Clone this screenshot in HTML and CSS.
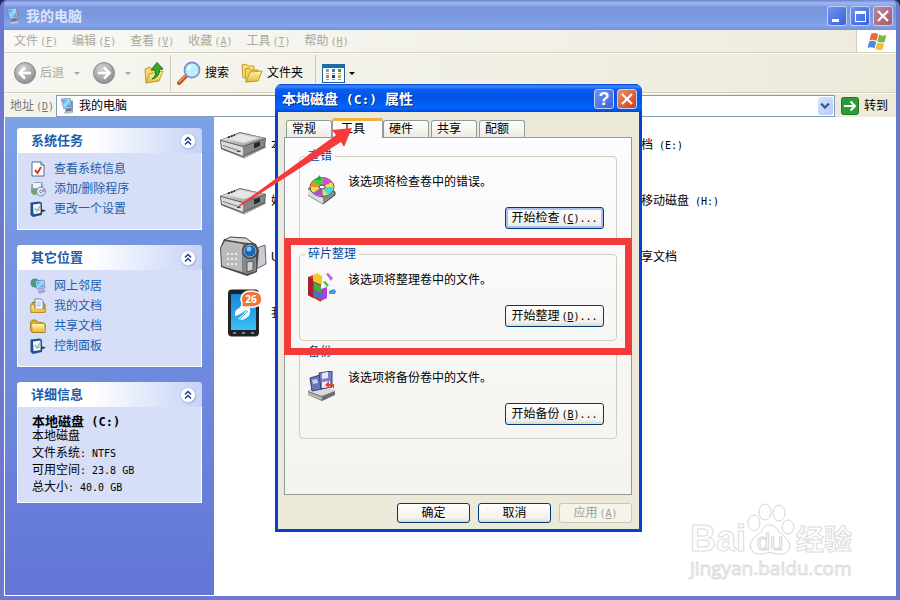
FILE: index.html
```html
<!DOCTYPE html>
<html lang="zh-CN">
<head>
    <meta charset="UTF-8">
    <meta name="viewport" content="width=device-width, initial-scale=1.0">
    <title>我的电脑</title>
    <link rel="stylesheet" href="styles.css">
</head>
<body>
    <!-- shared icons -->
    <svg class="defs" width="0" height="0">
        <defs>
            <linearGradient id="metal" x1="0" y1="0" x2="1" y2="1">
                <stop offset="0" stop-color="#f4f4f4"/>
                <stop offset="1" stop-color="#8c8c8c"/>
            </linearGradient>
            <linearGradient id="screen" x1="0" y1="0" x2="1" y2="1">
                <stop offset="0" stop-color="#2f7fd6"/>
                <stop offset="0.5" stop-color="#9be4fb"/>
                <stop offset="1" stop-color="#2a6fd0"/>
            </linearGradient>
            <linearGradient id="gold" x1="0" y1="0" x2="0" y2="1">
                <stop offset="0" stop-color="#fff6a8"/>
                <stop offset="1" stop-color="#e8b93c"/>
            </linearGradient>
            <linearGradient id="blueGlass" x1="0" y1="0" x2="0" y2="1">
                <stop offset="0" stop-color="#1587d6"/>
                <stop offset="1" stop-color="#3cc0f4"/>
            </linearGradient>
            <radialGradient id="grayBall" cx="0.4" cy="0.3" r="0.7">
                <stop offset="0" stop-color="#d6d6d6"/>
                <stop offset="1" stop-color="#8f8f8f"/>
            </radialGradient>
        </defs>
        <symbol id="pc" viewBox="0 0 16 16">
            <path d="M10 2 L13 3 L13 14 L9 15 Z" fill="#8d93ad"/>
            <path d="M1 1 L10 0 L12 10 L4 11 Z" fill="#c9d6ee" stroke="#5c74aa" stroke-width="0.6"/>
            <path d="M2 2 L9.4 1.2 L11 9 L4.6 9.8 Z" fill="url(#screen)"/>
            <path d="M6 11 L10 10.5 L11 13 L5 14 Z" fill="#6a7391"/>
            <path d="M4 14 L12 13 L13 15 L5 16 Z" fill="#b9bfd0"/>
        </symbol>
        <symbol id="chevrons" viewBox="0 0 18 18">
            <circle cx="9.5" cy="9.5" r="8" fill="#9aa8d4"/>
            <circle cx="9" cy="9" r="7.5" fill="#fff" stroke="#c3cdea"/>
            <path d="M6 8.5 L9 5.5 L12 8.5 M6 12.5 L9 9.5 L12 12.5" fill="none" stroke="#1d3f8a" stroke-width="1.5"/>
        </symbol>
        <symbol id="drive" viewBox="0 0 48 28">
            <path d="M3 18 L25 27 L47 16 L25 25 Z" fill="#bbb" stroke="#999"/>
            <path d="M1 9 L21 1 L47 7 L46 16 L24 26 L2 18 Z" fill="#5c5c5c"/>
            <path d="M2 9 L21 2 L46 7 L24 15 Z" fill="url(#metal)"/>
            <path d="M9 8 L21 3.5 L40 7 L25 12 Z" fill="#e6e6e6"/>
            <path d="M2 10 L24 16 L24 25 L3 17 Z" fill="#dcdcdc"/>
            <path d="M24 16 L46 8 L45 15 L24 25 Z" fill="#868686"/>
            <path d="M35 12.5 L41 10.5 L41 15 L35 17.5 Z" fill="#26282c"/>
            <path d="M4 14.5 L22 20.5" stroke="#777" stroke-width="1"/>
            <path d="M9 6.5 L16 4" stroke="#222" stroke-width="1.5" stroke-dasharray="2 1"/>
            <rect x="18" y="20" width="3" height="1" fill="#4a4a4a"/>
        </symbol>
        <symbol id="panelIcon" viewBox="0 0 16 16">
            <path d="M0.5 1.5 L10 0.5 L12 2 L12 14 L3 16 L0.5 14 Z" fill="#20518f"/>
            <path d="M3 3.5 L10.5 2.5 L10.5 12 L3.5 13.3 Z" fill="#eef6fb"/>
            <path d="M5 7 L7 10 L10 5" fill="none" stroke="#79a9c9" stroke-width="1.2"/>
            <path d="M7 9 L12 9.5" stroke="#e8b93c" stroke-width="1.6"/>
            <path d="M11 8 L16 9.5 L11 12 Z" fill="#24406e"/>
        </symbol>
        <symbol id="folder" viewBox="0 0 16 16">
            <path d="M0.5 4 L2.5 2 L6 2 L7.5 4 L14 5 L15.5 7 L15 14.5 L2 14.5 L0.5 12 Z" fill="#d9a92c" stroke="#94701b" stroke-width="0.8"/>
            <path d="M2 6 L14 6 L15 14 L3 14 Z" fill="url(#gold)"/>
        </symbol>
    </svg>

    <div class="window">
        <header class="titlebar">
            <svg class="icon16"><use href="#pc"/></svg>
            <h1>我的电脑</h1>
            <div class="window-buttons">
                <button type="button" class="win-btn" aria-label="最小化">
                    <svg viewBox="0 0 18 18"><rect x="4" y="12" width="7" height="3" fill="#fff"/></svg>
                </button>
                <button type="button" class="win-btn" aria-label="最大化">
                    <svg viewBox="0 0 18 18"><path d="M4.5 4.5 H14.5 V14.5 H4.5 Z" fill="none" stroke="#fff"/><rect x="4" y="4" width="11" height="3" fill="#fff"/></svg>
                </button>
                <button type="button" class="win-btn win-close" aria-label="关闭">
                    <svg viewBox="0 0 18 18"><path d="M4 4 L14 14 M14 4 L4 14" stroke="#fff" stroke-width="2.2"/></svg>
                </button>
            </div>
        </header>

        <nav class="menubar">
            <button type="button">文件<span class="en">(<u>F</u>)</span></button>
            <button type="button">编辑<span class="en">(<u>E</u>)</span></button>
            <button type="button">查看<span class="en">(<u>V</u>)</span></button>
            <button type="button">收藏<span class="en">(<u>A</u>)</span></button>
            <button type="button">工具<span class="en">(<u>T</u>)</span></button>
            <button type="button">帮助<span class="en">(<u>H</u>)</span></button>
            <div class="flag">
                <svg width="20" height="19" viewBox="0 0 20 19">
                    <path d="M4 2 Q7 0 11 2 L9.5 9 Q6 7 2.5 8.5 Z" fill="#ea6a35"/>
                    <path d="M12 2.5 Q15 4.5 19.5 3 L17.5 10 Q13.5 11 10.5 9.5 Z" fill="#7ab648"/>
                    <path d="M2.2 9.5 Q6 8 9.2 10 L7.5 16.5 Q4 14.5 0.5 16 Z" fill="#4a8ae0"/>
                    <path d="M10.2 10.5 Q14 12 17.2 11 L15.5 17.5 Q12 19 8.5 17 Z" fill="#f5c02f"/>
                </svg>
            </div>
        </nav>

        <div class="toolbar">
            <button type="button" class="tool muted">
                <svg width="22" height="22" viewBox="0 0 22 22"><circle cx="11" cy="11" r="10.5" fill="url(#grayBall)" stroke="#8a8a8a"/><path d="M17 11 H6 M11 5.5 L5.5 11 L11 16.5" fill="none" stroke="#fff" stroke-width="2.6"/></svg>
                后退
                <span class="caret"></span>
            </button>
            <button type="button" class="tool muted" aria-label="前进">
                <svg width="22" height="22" viewBox="0 0 22 22"><circle cx="11" cy="11" r="10.5" fill="url(#grayBall)" stroke="#8a8a8a"/><path d="M5 11 H16 M11 5.5 L16.5 11 L11 16.5" fill="none" stroke="#fff" stroke-width="2.6"/></svg>
                <span class="caret"></span>
            </button>
            <button type="button" class="tool" aria-label="向上">
                <svg width="20" height="22" viewBox="0 0 20 22">
                    <path d="M1 7 L6 5 L8 8 L14 7 L14 17 L2 21 Z" fill="#f4dc6a" stroke="#c49a2a"/>
                    <path d="M5 12 L19 9 L15 19 L2 21 Z" fill="url(#gold)" stroke="#c49a2a"/>
                    <path d="M8 17 Q13 14 11 8 L7 8 L13 0.5 L19 7 L15.5 7.5 Q16 15 8 17 Z" fill="#37a82c" stroke="#1c761a"/>
                </svg>
            </button>
            <span class="separator"></span>
            <button type="button" class="tool">
                <svg width="24" height="24" viewBox="0 0 24 24">
                    <path d="M2 22 L9 15" stroke="#b5561f" stroke-width="4" stroke-linecap="round"/>
                    <path d="M2 21 L8 15" stroke="#f0a25c" stroke-width="1.5" stroke-linecap="round"/>
                    <circle cx="15" cy="9" r="7.5" fill="#c4ecfb" stroke="#7898cc" stroke-width="1.8"/>
                    <path d="M10.5 9 Q11 4.5 15.5 4.5 Q13 6 12.5 9 Z" fill="#fff"/>
                </svg>
                搜索
            </button>
            <button type="button" class="tool folders">
                <svg width="22" height="20" viewBox="0 0 22 20">
                    <path d="M1 2 L5 1 L7 3 L13 3 L13 13 L2 15 Z" fill="#f6df7c" stroke="#c49a2a"/>
                    <path d="M4 6 L8 5 L10 7 L17 7 L17 17 L5 19 Z" fill="#f3d25a" stroke="#c49a2a"/>
                    <path d="M9 9 L21 8 L17 18 L5 19 Z" fill="url(#gold)" stroke="#c49a2a"/>
                </svg>
                文件夹
            </button>
            <span class="separator"></span>
            <button type="button" class="tool views" aria-label="查看">
                <svg width="23" height="19" viewBox="0 0 23 19">
                    <rect x="0.5" y="0.5" width="22" height="18" fill="#fff" stroke="#1f6098"/>
                    <rect x="0" y="0" width="23" height="4" fill="#1f6aa8"/>
                    <path d="M4 6.5 h3" stroke="#9a9ab0" stroke-width="3"/><path d="M10 6.5 h3" stroke="#3f78c8" stroke-width="3"/><path d="M16 6.5 h3" stroke="#3a9a3a" stroke-width="3"/>
                    <path d="M4 9.5 h3 M10 9.5 h3 M16 9.5 h3 M4 15.5 h3 M10 15.5 h3 M16 15.5 h3" stroke="#999" stroke-width="1"/>
                    <path d="M4 12.5 h3" stroke="#d9764f" stroke-width="3"/><path d="M10 12.5 h3" stroke="#123f94" stroke-width="3"/><path d="M16 12.5 h3" stroke="#cfa23a" stroke-width="3"/>
                </svg>
                <span class="caret"></span>
            </button>
        </div>

        <div class="addressbar">
            <label for="address">地址<span class="en">(<u>D</u>)</span></label>
            <div class="address-box">
                <svg class="icon16"><use href="#pc"/></svg>
                <input type="text" id="address" value="我的电脑">
                <button type="button" class="address-drop" aria-label="展开地址">
                    <svg width="10" height="8" viewBox="0 0 10 8"><path d="M1 1.5 L5 5.5 L9 1.5" fill="none" stroke="#40598c" stroke-width="2.4"/></svg>
                </button>
            </div>
            <button type="button" class="go">
                <svg width="18" height="18" viewBox="0 0 18 18"><rect x="0.5" y="0.5" width="17" height="17" rx="2" fill="#2c9a37" stroke="#1d7a2a"/><path d="M3 9 H14 M9.5 4.5 L14 9 L9.5 13.5" fill="none" stroke="#fff" stroke-width="2"/></svg>
                转到
            </button>
        </div>

        <div class="content">
            <aside class="sidebar">
                <section class="card">
                    <div class="card-head">
                        <h2>系统任务</h2>
                        <button type="button" aria-label="折叠"><svg class="icon18"><use href="#chevrons"/></svg></button>
                    </div>
                    <ul class="links">
                        <li><a href="#">
                            <svg class="icon16" viewBox="0 0 16 16"><path d="M2 1 H11 L14 4 V15 H2 Z" fill="#fff" stroke="#4f6a9c"/><path d="M11 1 V4 H14" fill="#c9d6ee" stroke="#4f6a9c"/><path d="M5 9 L7.5 12 L11 6" fill="none" stroke="#d2401e" stroke-width="2"/></svg>
                            查看系统信息</a></li>
                        <li><a href="#">
                            <svg class="icon16" viewBox="0 0 16 16"><path d="M1 4 L5 1 H12 L13 5 L11 14 L1 12 Z" fill="#8f9fb5"/><rect x="3" y="2" width="8" height="5" fill="#eef3f8"/><path d="M1 9 L7 8 L9 13 L3 14 Z" fill="#69a85e"/><circle cx="11" cy="10.5" r="4.5" fill="#dbe5f2" stroke="#7a8db2"/><path d="M11 10.5 L14 7.5 L15 11 Z" fill="#a984cf"/><circle cx="11" cy="10.5" r="1.3" fill="#fff" stroke="#7a8db2"/></svg>
                            添加/删除程序</a></li>
                        <li><a href="#"><svg class="icon16"><use href="#panelIcon"/></svg>更改一个设置</a></li>
                    </ul>
                </section>

                <section class="card">
                    <div class="card-head">
                        <h2>其它位置</h2>
                        <button type="button" aria-label="折叠"><svg class="icon18"><use href="#chevrons"/></svg></button>
                    </div>
                    <ul class="links">
                        <li><a href="#">
                            <svg class="icon16" viewBox="0 0 16 16"><circle cx="5" cy="5" r="4.5" fill="#3f86d2"/><path d="M1 4 Q4 0 6 2 L4 6 L6 8 L3 9 Z" fill="#4ba649"/><path d="M5 3 L14 2 L15 10 L7 11 Z" fill="#c9d6ee" stroke="#5870a6" stroke-width="0.6"/><path d="M6.5 4 L13 3.3 L13.8 9 L8 9.7 Z" fill="url(#screen)"/><path d="M8 12 L14 11 L16 14 L9 16 Z" fill="#a9a6cf"/></svg>
                            网上邻居</a></li>
                        <li><a href="#">
                            <svg class="icon16" viewBox="0 0 16 16"><path d="M1 7 L3 4 H13 L15 7 V14.5 H1 Z" fill="#d9a92c" stroke="#94701b"/><path d="M5 1 H11 L13 3 V12 H5 Z" fill="#fff" stroke="#6d87ad"/><path d="M6.5 4 H11 M6.5 6 H11 M6.5 8 H11" stroke="#8db1d8"/><path d="M1 7 L4 7 L5 11 H15 V14.5 H1 Z" fill="url(#gold)" stroke="#b48a22" stroke-width="0.6"/></svg>
                            我的文档</a></li>
                        <li><a href="#"><svg class="icon16"><use href="#folder"/></svg>共享文档</a></li>
                        <li><a href="#"><svg class="icon16"><use href="#panelIcon"/></svg>控制面板</a></li>
                    </ul>
                </section>

                <section class="card">
                    <div class="card-head">
                        <h2>详细信息</h2>
                        <button type="button" aria-label="折叠"><svg class="icon18"><use href="#chevrons"/></svg></button>
                    </div>
                    <div class="details">
                        <h3>本地磁盘<span class="en"> (C:)</span></h3>
                        <p>本地磁盘</p>
                        <p>文件系统<span class="en">: NTFS</span></p>
                        <p>可用空间<span class="en">: 23.8 GB</span></p>
                        <p>总大小<span class="en">: 40.0 GB</span></p>
                    </div>
                </section>
            </aside>

            <main class="files">
                <ul class="file-column">
                    <li><svg width="48" height="28"><use href="#drive"/></svg>本地磁盘</li>
                    <li><svg width="48" height="28"><use href="#drive"/></svg>娱乐</li>
                    <li>
                        <svg width="48" height="42" viewBox="0 0 48 42">
                            <path d="M35 13 L46 9 L47 28 L37 33 Z" fill="#c9ccd2" stroke="#666"/>
                            <path d="M1 12 L5 3 L24 2 L37 8 L40 14 L38 36 L28 40 L2 31 Z" fill="#4d4d4d"/>
                            <path d="M2 12 L6 5 L24 8 L23 36 L3 30 Z" fill="#b9bbbd"/>
                            <path d="M24 8 L37 10 L37 35 L28 38 L23 36 Z" fill="#88898c"/>
                            <path d="M6 4 L11 1 L27 2 L35 8 L24 7 Z" fill="#d8d8d8" stroke="#444"/>
                            <path d="M8 18 H20 M8 23 H20 M8 28 H20" stroke="#eee" stroke-width="2" stroke-dasharray="2 2"/>
                            <circle cx="31" cy="15" r="8" fill="#44474d"/>
                            <circle cx="31" cy="15" r="6" fill="#1d63b8" stroke="#9db6d0"/>
                            <circle cx="30" cy="13" r="2.5" fill="#7ec4f5"/>
                            <path d="M28 26 L34 25 V34 L28 36 Z" fill="#d3d3d3" stroke="#555"/>
                        </svg>
                        USB
                    </li>
                    <li>
                        <svg width="48" height="48" viewBox="0 0 48 48">
                            <rect x="9" y="0.5" width="31" height="47" rx="4" fill="#202428"/>
                            <rect x="12" y="5" width="25" height="36" fill="url(#blueGlass)"/>
                            <path d="M16 23 Q20 16 31 19 Q33 28 23 31 L19 30 Q22 28 27 22 Q22 26 16 27 Z" fill="#fff"/>
                            <path d="M17 28 L28 21 M20 31 L29 22" stroke="#3aaeea" stroke-width="1"/>
                            <path d="M14 44 h3 M23 44 h3 M32 44 h3" stroke="#9a9fa3" stroke-width="1.5"/>
                            <path d="M22 11 Q22 2 32 2 Q43 2 43 10 Q43 18 32 18 L22 18 Q24 15 22 11 Z" fill="#f0743a" stroke="#fff" stroke-width="1.5"/>
                            <text x="32" y="14" class="badge-text">26</text>
                        </svg>
                        我的手机
                    </li>
                </ul>
                <ul class="file-column labels">
                    <li><span>文档<span class="en"> (E:)</span></span></li>
                    <li><span>可移动磁盘<span class="en"> (H:)</span></span></li>
                    <li>共享文档</li>
                </ul>

                <div class="watermark">
                    <div class="brand">
                        <span class="brand-bai">Bai</span>
                        <svg width="50" height="52" viewBox="0 0 50 52" fill="#fff" stroke="#d6d6d6">
                            <ellipse cx="8" cy="20" rx="6" ry="8"/>
                            <ellipse cx="19" cy="9" rx="6" ry="8"/>
                            <ellipse cx="33" cy="10" rx="6" ry="8"/>
                            <ellipse cx="42" cy="24" rx="6" ry="7"/>
                            <path d="M24 22 Q30 22 33 29 Q44 37 44 43 Q43 52 33 51 Q24 48 15 51 Q5 52 4 42 Q5 36 15 29 Q18 22 24 22 Z"/>
                            <text x="24" y="47" class="paw-text">du</text>
                        </svg>
                        <span class="brand-cn">经验</span>
                    </div>
                    <div class="site">jingyan.baidu.com</div>
                </div>
            </main>
        </div>
    </div>

    <div class="dialog" role="dialog" aria-labelledby="dialogTitle">
        <div class="dialog-title">
            <h2 id="dialogTitle">本地磁盘<span class="en"> (C:) </span>属性</h2>
            <button type="button" class="win-btn help" aria-label="帮助">?</button>
            <button type="button" class="win-btn dialog-close" aria-label="关闭">
                <svg viewBox="0 0 18 18"><path d="M4 4 L14 14 M14 4 L4 14" stroke="#fff" stroke-width="2.2"/></svg>
            </button>
        </div>
        <div class="dialog-body">
            <div class="tabs" role="tablist">
                <button type="button" role="tab">常规</button>
                <button type="button" role="tab" class="active" aria-selected="true">工具</button>
                <button type="button" role="tab">硬件</button>
                <button type="button" role="tab">共享</button>
                <button type="button" role="tab">配额</button>
            </div>
            <div class="tab-panel" role="tabpanel">
                <fieldset>
                    <legend>查错</legend>
                    <div class="option">
                        <svg width="28" height="30" viewBox="0 0 28 30">
                            <path d="M0 14 L10 8 L27 17 L27 20 L15 29 L0 20 Z" fill="#8a8a8a" stroke="#444"/>
                            <path d="M0 14 L15 23 L15 29 L0 20 Z" fill="#dcdcdc"/>
                            <ellipse cx="14" cy="12" rx="12" ry="9.5" fill="#e6e640" stroke="#555"/>
                            <path d="M14 12 L4 7 Q9 2 15 2.5 Z" fill="#3fd24c"/>
                            <path d="M14 12 L15 2.5 Q22 4 24 7 Z" fill="#d94bd6"/>
                            <path d="M14 12 L26 12 Q25 17 20 20 Z" fill="#42d9e0"/>
                            <path d="M14 12 L15 21 Q7 20 5 18 Z" fill="#b04ce0"/>
                            <path d="M14 12 L2 12 L4 7 Z" fill="#f28a2a"/>
                            <ellipse cx="14" cy="12" rx="3" ry="2" fill="#fff" stroke="#444"/>
                            <path d="M7 5 L12 0 L13 5 Z" fill="#25a63a"/>
                        </svg>
                        <p>该选项将检查卷中的错误。</p>
                    </div>
                    <button type="button" class="btn action focused">开始检查<span class="en">(<u>C</u>)...</span></button>
                </fieldset>
                <fieldset>
                    <legend>碎片整理</legend>
                    <div class="option">
                        <svg width="28" height="30" viewBox="0 0 28 30">
                            <path d="M0 4 L5 2 L13 6 V29 L0 22 Z" fill="#d9333a"/>
                            <path d="M5 2 L9 0 L14 3 V12 L5 8 Z" fill="#f3c92c"/>
                            <path d="M0 4 L5 6 V25 L0 22 Z" fill="#a81f30"/>
                            <path d="M6 10 L13 13 V20 L6 17 Z" fill="#37b24a"/>
                            <path d="M6 18 L13 21 V26 L6 23 Z" fill="#2b7fe0"/>
                            <path d="M13 16 L19 14 V25 L13 28 Z" fill="#b43bd6"/>
                            <path d="M18 1 L20 0 L25 5 L23 8 Z" fill="#c95fe0"/>
                            <path d="M15 9 L17 8 L21 12 L19 14 Z" fill="#49bf5a"/>
                            <path d="M21 18 L26 16 L28 18 L27 21 L21 21 Z" fill="#3a9bd8"/>
                        </svg>
                        <p>该选项将整理卷中的文件。</p>
                    </div>
                    <button type="button" class="btn action">开始整理<span class="en">(<u>D</u>)...</span></button>
                </fieldset>
                <fieldset>
                    <legend>备份</legend>
                    <div class="option">
                        <svg width="28" height="30" viewBox="0 0 28 30">
                            <path d="M0 20 L10 15 L27 20 L27 24 L14 30 L0 24 Z" fill="#6e6e6e"/>
                            <path d="M0 20 L10 15 L27 20 L14 25 Z" fill="#dadada"/>
                            <path d="M0 21 L14 26 V29 L0 24 Z" fill="#b5b5b5"/>
                            <path d="M2 7 L12 4 L14 18 L4 20 Z" fill="#6a73bb" stroke="#363f80"/>
                            <path d="M4 9 L9 8 L10 12 L5 13 Z" fill="#c9cfee"/>
                            <path d="M11 2 L24 0 L24 16 L13 18 Z" fill="#7880cc" stroke="#363f80"/>
                            <path d="M14 2 L20 1 L20 7 L14 8 Z" fill="#e4e6f5"/>
                            <path d="M14 11 L22 10 V16 L14 17 Z" fill="#eceef8"/>
                            <path d="M17 14 L21 10 V13 L26 13 V18 L24 15 L21 15 V17 Z" fill="#e8421e"/>
                        </svg>
                        <p>该选项将备份卷中的文件。</p>
                    </div>
                    <button type="button" class="btn action">开始备份<span class="en">(<u>B</u>)...</span></button>
                </fieldset>
                <div class="highlight"></div>
            </div>
            <div class="dialog-footer">
                <button type="button" class="btn">确定</button>
                <button type="button" class="btn">取消</button>
                <button type="button" class="btn" disabled>应用<span class="en">(<u>A</u>)</span></button>
            </div>
        </div>
    </div>

    <!-- arrow pointing at the tools tab -->
    <svg class="arrow" width="120" height="84" viewBox="0 0 120 84">
        <path d="M0 81 L98 10 L94 5 L114 3 L106 22 L103 17 L1 82 Z" fill="#f43b3b"/>
    </svg>
</body>
</html>
```

FILE: styles.css
```css
* {
    margin: 0;
    padding: 0;
    box-sizing: border-box;
}

body {
    background-color: #1c2c50;
    font-family: "Liberation Sans", "Noto Sans CJK SC", sans-serif;
    font-size: 12px;
    line-height: 14px;
    color: #000;
}

button,
input {
    font: inherit;
    color: inherit;
    border: none;
    background: none;
}

ul {
    list-style: none;
}

svg {
    display: block;
    flex: none;
}

.defs {
    position: absolute;
}

.en {
    font-family: "DejaVu Sans Mono", monospace;
    font-size: 10px;
    line-height: 10px;
    white-space: pre;
}

.icon16 {
    width: 16px;
    height: 16px;
}

.icon18 {
    width: 18px;
    height: 18px;
}

/* main window */
.window {
    display: flex;
    flex-direction: column;
    min-height: 100vh;
    border: 4px solid #6d78cf;
    border-top: none;
    border-radius: 7px 7px 0 0;
    background-color: #6d78cf;
    overflow: hidden;
}

.titlebar {
    display: flex;
    align-items: center;
    gap: 4px;
    height: 30px;
    margin: 0 -4px;
    padding: 2px 7px 0 6px;
    background: linear-gradient(#6b82cf, #a0b9f0 10%, #7b97e0 25%, #7a96df 50%, #82a4e8 85%, #7790dc);
}

.titlebar h1 {
    flex: 1;
    font-size: 14px;
    line-height: 20px;
    color: #dbe5fa;
}

.window-buttons {
    display: flex;
    gap: 3px;
}

.win-btn {
    width: 20px;
    height: 20px;
    border: 1px solid #c2d0f5;
    border-radius: 3px;
    background: linear-gradient(135deg, #6f93ee, #3a63dc);
}

.win-btn svg {
    width: 18px;
    height: 18px;
}

.win-close {
    background: linear-gradient(135deg, #c08595, #a25a70);
}

.menubar {
    display: flex;
    align-items: center;
    gap: 14px;
    height: 23px;
    padding-left: 10px;
    border-bottom: 1px solid #d3cfbd;
    background: linear-gradient(90deg, #f8f8f6, #eeebdd);
    color: #aca899;
}

.menubar .en,
.addressbar .en,
.btn .en {
    margin-left: 2px;
}

.flag {
    display: flex;
    align-items: center;
    justify-content: center;
    align-self: stretch;
    width: 40px;
    margin-left: auto;
    border-left: 1px solid #d3cfbd;
    background-color: #fff;
}

.toolbar {
    display: flex;
    align-items: center;
    gap: 12px;
    height: 40px;
    padding-left: 10px;
    border-top: 1px solid #fff;
    border-bottom: 1px solid #d3cfbd;
    background: linear-gradient(90deg, #f6f6f2, #edeada);
}

.tool {
    display: flex;
    align-items: center;
    gap: 4px;
    white-space: nowrap;
}

.muted {
    color: #aca899;
}

.folders {
    margin-right: 6px;
}

.caret {
    margin: 0 1px 0 6px;
    border: 3px solid transparent;
    border-top-color: currentColor;
    border-bottom: none;
}

.views .caret {
    margin-left: 0;
}

.separator {
    width: 1px;
    height: 36px;
    margin: 0 -6px;
    background-color: #cdc9b8;
}

.addressbar {
    display: flex;
    align-items: center;
    gap: 2px;
    height: 24px;
    padding: 0 8px 0 6px;
    border-top: 1px solid #fff;
    background: linear-gradient(90deg, #f4f4ef, #edeada);
}

.addressbar label {
    color: #7c7a70;
    white-space: nowrap;
}

.address-box {
    display: flex;
    flex: 1;
    align-items: center;
    gap: 3px;
    height: 22px;
    margin-right: 4px;
    padding: 0 1px 0 3px;
    border: 1px solid #7f9db9;
    background-color: #fff;
}

.address-box input {
    flex: 1;
    min-width: 0;
}

.address-drop {
    display: flex;
    align-items: center;
    justify-content: center;
    width: 15px;
    height: 18px;
    border-radius: 2px;
    background: linear-gradient(135deg, #dbe6fd, #b3c9f5);
}

.go {
    display: flex;
    align-items: center;
    gap: 5px;
}

.content {
    display: flex;
    flex: 1;
    border-left: 1px solid #fff;
    border-bottom: 1px solid #fff;
    background-color: #fff;
}

/* task pane */
.sidebar {
    display: flex;
    flex-direction: column;
    flex: none;
    gap: 15px;
    width: 209px;
    padding: 11px 12px;
    background: linear-gradient(#7ba2e7, #6375d6);
}

.card-head {
    display: flex;
    align-items: center;
    justify-content: space-between;
    height: 25px;
    padding: 0 5px 0 14px;
    border-radius: 3px 3px 0 0;
    background: linear-gradient(90deg, #fff 40%, #c6d3f7);
}

.card-head h2 {
    font-size: 13px;
    color: #215daa;
}

.links,
.details {
    border: 1px solid #fff;
    border-top: none;
    background-color: #d6dff7;
}

.links {
    padding: 6px 12px 10px;
}

.links a {
    display: flex;
    align-items: center;
    gap: 8px;
    height: 20px;
    color: #215daa;
    text-decoration: none;
}

.details {
    padding: 8px 14px 6px;
    line-height: 17px;
}

.details h3 {
    font-size: 13px;
    line-height: 13px;
}

.details h3 .en {
    font-size: 12px;
}

/* file list */
.files {
    position: relative;
    display: flex;
    flex: 1;
    min-width: 0;
    padding-left: 5px;
}

.file-column {
    flex: none;
    width: 358px;
}

.file-column li {
    display: flex;
    align-items: center;
    gap: 4px;
    height: 56px;
}

.labels {
    flex: 1;
    width: auto;
    padding-left: 52px;
}

.badge-text {
    font: bold 10px "Open Sans", sans-serif;
    fill: #fff;
    text-anchor: middle;
}

.watermark {
    position: absolute;
    right: 44px;
    bottom: 14px;
    color: #fff;
    -webkit-text-stroke: 1px #dcdcdc;
}

.brand {
    display: flex;
    align-items: flex-end;
    font-weight: bold;
}

.brand-bai {
    font-size: 36px;
    line-height: 32px;
}

.brand-cn {
    font-size: 28px;
    line-height: 28px;
}

.paw-text {
    font: 24px "Liberation Sans", sans-serif;
    text-anchor: middle;
}

.site {
    font-family: "Open Sans", sans-serif;
    font-size: 19px;
    line-height: 26px;
}

/* properties dialog */
.dialog {
    position: absolute;
    left: 275px;
    top: 84px;
    width: 367px;
    border: 3px solid #0a3fd0;
    border-top: none;
    border-radius: 7px 7px 0 0;
    background-color: #0a3fd0;
}

.dialog-title {
    display: flex;
    align-items: center;
    gap: 3px;
    height: 28px;
    margin: 0 -3px;
    padding: 1px 5px 0 7px;
    border-radius: 7px 7px 0 0;
    background: linear-gradient(#0a3fd0, #3a8cff 8%, #0a5cf0 20%, #0054e6 50%, #0066ff 85%, #0046d8);
}

.dialog-title h2 {
    flex: 1;
    font-size: 14px;
    line-height: 20px;
    color: #fff;
    text-shadow: 1px 1px 0 #0a2a80;
}

.dialog-title .en {
    font-size: 13px;
}

.help {
    font-size: 18px;
    font-weight: bold;
    line-height: 18px;
    color: #fff;
}

.dialog-close {
    background: linear-gradient(135deg, #f0906c, #d23a12);
}

.dialog-body {
    padding: 6px 7px 6px 6px;
    background-color: #ece9d8;
}

.tabs {
    display: flex;
    align-items: flex-end;
    padding-left: 2px;
}

.tabs button {
    width: 46px;
    height: 17px;
    margin-right: 2px;
    padding-left: 5px;
    border: 1px solid #919b9c;
    border-bottom: none;
    border-radius: 3px 3px 0 0;
    background: linear-gradient(#fff, #ecebe4);
    line-height: 16px;
    text-align: left;
}

.tabs button:first-child {
    margin-right: 0;
}

.tabs .active {
    position: relative;
    z-index: 1;
    width: 51px;
    height: 20px;
    margin: 0 0 -1px;
    padding: 0 0 2px 8px;
    border-top: 3px solid #f0b040;
    background: #fcfcfe;
    line-height: 14px;
}

.tab-panel {
    position: relative;
    display: flex;
    flex-direction: column;
    gap: 4px;
    min-height: 358px;
    padding: 11px 14px;
    border: 1px solid #919b9c;
    background: linear-gradient(#fcfcfe, #f4f3ee);
}

fieldset {
    height: 94px;
    padding: 12px 12px 0 8px;
    border: 1px solid #d0d0bf;
    border-radius: 4px;
}

legend {
    margin-left: -3px;
    padding: 0 3px;
    color: #0046a5;
}

.option {
    display: flex;
    gap: 12px;
    height: 32px;
}

.btn {
    width: 73px;
    height: 20px;
    border: 1px solid #003c74;
    border-radius: 3px;
    background: linear-gradient(#fff, #f2f1ea 80%, #dcd8cc);
    white-space: nowrap;
}

.action {
    display: block;
    width: 99px;
    height: 22px;
    margin-left: auto;
}

.focused {
    box-shadow: inset 0 0 0 2px #a9c1ee;
}

.btn:disabled {
    border-color: #c9c7ba;
    background: #f5f4ea;
    color: #a1a192;
}

/* red frame over the defragment group */
.highlight {
    position: absolute;
    left: -1px;
    right: -1px;
    top: 100px;
    height: 117px;
    border: 7px solid #f43b3b;
}

.dialog-footer {
    display: flex;
    justify-content: flex-end;
    gap: 8px;
    padding-top: 8px;
}

.arrow {
    position: absolute;
    z-index: 2;
    left: 238px;
    top: 125px;
    pointer-events: none;
}
```
